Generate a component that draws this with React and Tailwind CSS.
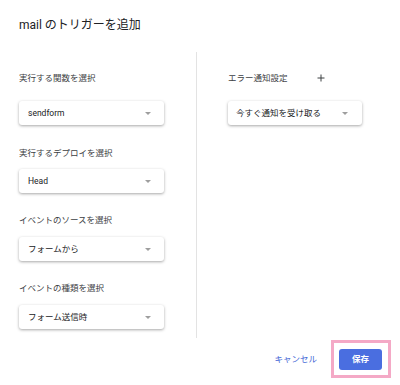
import React from 'react';

const font = { fontFamily: 'Roboto, "Noto Sans CJK JP", sans-serif' };

function Select({ value, width, textPad = 'pl-[9px]', arrowPad = 'pr-[13px]' }) {
  return (
    <div
      className={`h-[24px] ${width} ${textPad} ${arrowPad} flex items-center justify-between bg-white rounded-[3px] shadow-[0_1px_3px_rgba(0,0,0,0.35)]`}
    >
      <span className="text-[8.5px] leading-[12px] text-[#202124]">{value}</span>
      <span className="w-0 h-0 border-l-[3px] border-r-[3px] border-t-[3px] border-l-transparent border-r-transparent border-t-[#9e9e9e]" />
    </div>
  );
}

function Label({ children, className = '' }) {
  return <div className={`text-[8.5px] leading-[12px] text-[#3c4043] ${className}`}>{children}</div>;
}

export default function App() {
  return (
    <div className="w-[400px] h-[385px] bg-white flex flex-col" style={font}>
      <div className="pt-[17px] pl-[19px] text-[12px] leading-[16px] text-[#202124]">
        mail のトリガーを追加
      </div>

      <div className="flex mt-[19px]">
        {/* left: function / deploy / event */}
        <div className="w-[197px] h-[286px] border-r border-[#e3e3e3] pl-[19px] pt-[20px] flex flex-col">
          <Label>実行する関数を選択</Label>
          <div className="mt-[17px]">
            <Select value="sendform" width="w-[145px]" />
          </div>

          <Label className="mt-[22px]">実行するデプロイを選択</Label>
          <div className="mt-[10px]">
            <Select value="Head" width="w-[145px]" />
          </div>

          <Label className="mt-[21px]">イベントのソースを選択</Label>
          <div className="mt-[11px]">
            <Select value="フォームから" width="w-[145px]" />
          </div>

          <Label className="mt-[21px]">イベントの種類を選択</Label>
          <div className="mt-[11px]">
            <Select value="フォーム送信時" width="w-[145px]" />
          </div>
        </div>

        {/* right: notification */}
        <div className="pl-[31px] pt-[20px] flex flex-col">
          <div className="flex items-center">
            <Label>エラー通知設定</Label>
            <svg className="ml-[29px]" width="8" height="8" viewBox="0 0 8 8">
              <path d="M4 0.5V7.5M0.5 4H7.5" stroke="#3c4043" strokeWidth="1" />
            </svg>
          </div>
          <div className="mt-[17px]">
            <Select value="今すぐ通知を受け取る" width="w-[134px]" textPad="pl-[8px]" arrowPad="pr-[14px]" />
          </div>
        </div>
      </div>

      <div className="flex justify-end items-center mt-[2px] pr-[9px]">
        <button className="text-[8.5px] leading-[12px] text-[#4467d6] mr-[14px]">キャンセル</button>
        <div className="border-[3px] border-[#f4a9c6] pt-[6px] pb-[5px] pl-[5px] pr-[6px]">
          <button className="w-[43px] h-[21px] rounded-[3px] bg-[#4a6ee0] text-white text-[8.5px] font-bold flex items-center justify-center">
            保存
          </button>
        </div>
      </div>
    </div>
  );
}
